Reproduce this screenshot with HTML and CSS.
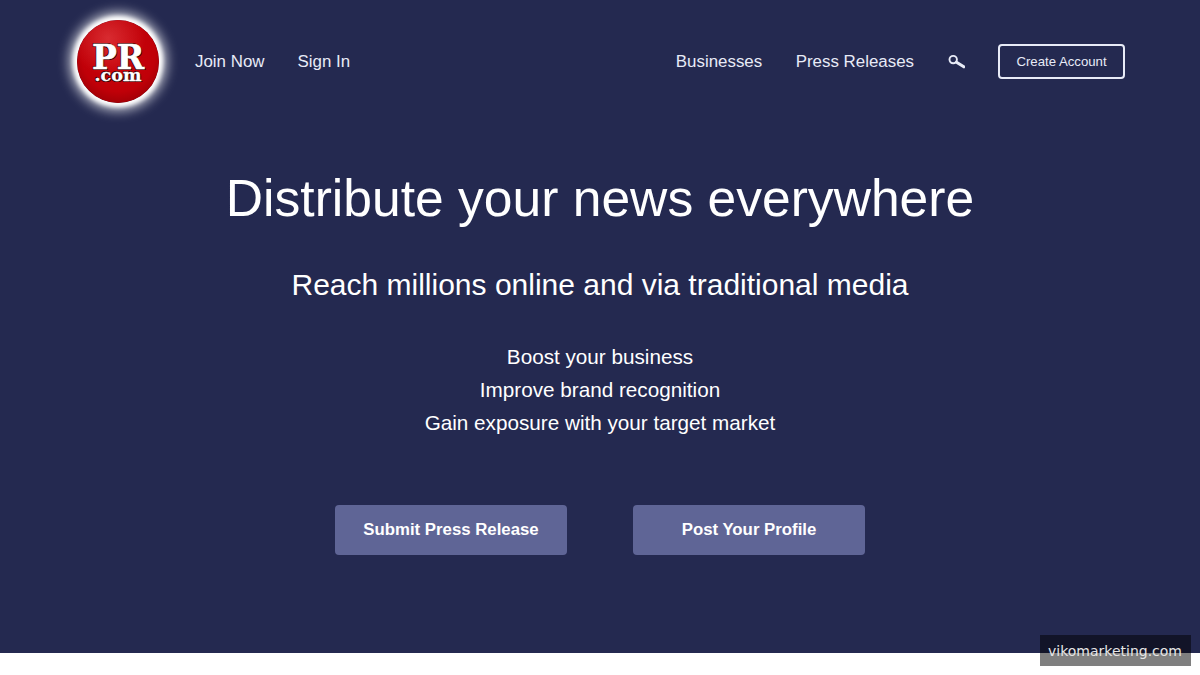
FILE: index.html
```html
<!DOCTYPE html>
<html lang="en">
<head>
    <meta charset="UTF-8">
    <meta name="viewport" content="width=device-width, initial-scale=1.0">
    <title>PR.com</title>
    <link rel="stylesheet" href="styles.css">
</head>
<body>
    <section class="hero">
        <header class="top-nav">
            <a class="logo" href="#">PR<br><small>.com</small></a>
            <nav class="nav-left">
                <a href="#">Join Now</a>
                <a href="#">Sign In</a>
            </nav>
            <nav class="nav-right">
                <a href="#">Businesses</a>
                <a href="#">Press Releases</a>
                <a class="search-link" href="#" aria-label="Search">
                    <svg width="17" height="16" viewBox="0 0 17 16">
                        <circle cx="5.2" cy="5.6" r="3.7" fill="none" stroke="#e8ebf7" stroke-width="1.9"/>
                        <path d="M8.5 8.2 L15.8 12.8" fill="none" stroke="#e8ebf7" stroke-width="3" stroke-linecap="round"/>
                    </svg>
                </a>
                <a class="create-account" href="#">Create Account</a>
            </nav>
        </header>

        <div class="hero-text">
            <h1>Distribute your news everywhere</h1>
            <h2>Reach millions online and via traditional media</h2>
            <ul class="benefits">
                <li>Boost your business</li>
                <li>Improve brand recognition</li>
                <li>Gain exposure with your target market</li>
            </ul>
        </div>

        <div class="cta-row">
            <a class="cta" href="#">Submit Press Release</a>
            <a class="cta" href="#">Post Your Profile</a>
        </div>
    </section>

    <div class="watermark">vikomarketing.com</div>
</body>
</html>
```

FILE: styles.css
```css
* {
    box-sizing: border-box;
}
html, body {
    height: 675px;
    overflow: hidden;
}
body {
    margin: 0;
    background: #fff;
    color: #fff;
    font-family: "Liberation Sans", Arial, sans-serif;
}
a {
    color: inherit;
    text-decoration: none;
}
.hero {
    height: 653px;
    background: #242950;
}
.top-nav {
    display: flex;
    align-items: center;
    height: 122px;
    padding: 0 75px 0 77px;
}
.logo {
    width: 82px;
    height: 83px;
    margin-right: 36px;
    border-radius: 50%;
    background:
        radial-gradient(circle at 38% 22%, rgba(255, 120, 120, 0.35) 0%, rgba(255, 120, 120, 0) 45%),
        radial-gradient(circle at 50% 42%, #c8040c 0%, #c00008 58%, #a00006 78%, #3c0002 100%);
    box-shadow: 0 0 4px 4px #fff, 0 0 12px 8px rgba(255, 255, 255, 0.7);
    padding-top: 25px;
    text-align: center;
    font-family: "DejaVu Serif", serif;
    font-size: 33px;
    line-height: 25px;
    font-weight: bold;
    color: #fff;
    -webkit-text-stroke: 0.6px #fff;
    text-shadow: 1px 1px 0 #3a0003, -1px 1px 0 #3a0003, -1px -1px 0 #3a0003;
}
.logo small {
    display: block;
    font-size: 17.5px;
    line-height: 11px;
    -webkit-text-stroke: 0.3px #fff;
}
.nav-left, .nav-right {
    display: flex;
    align-items: center;
    font-size: 16.9px;
    color: #e8ebf7;
    padding-top: 1px;
}
.nav-left {
    gap: 33px;
}
.nav-right {
    margin-left: auto;
    gap: 33.5px;
}
.search-link {
    display: flex;
}
.create-account {
    width: 127px;
    height: 35px;
    border: 2px solid #e8ebf7;
    border-radius: 4px;
    font-size: 13.2px;
    display: flex;
    align-items: center;
    justify-content: center;
}
.hero-text {
    text-align: center;
}
h1 {
    margin: 43px 0 0;
    font-size: 51.6px;
    line-height: 66px;
    font-weight: normal;
}
h2 {
    margin: 36px 0 0;
    font-size: 30px;
    line-height: 36px;
    font-weight: normal;
}
.benefits {
    list-style: none;
    margin: 37px 0 0;
    padding: 0;
    font-size: 20.7px;
    line-height: 33px;
}
.cta-row {
    display: flex;
    justify-content: center;
    gap: 66px;
    margin-top: 66px;
}
.cta {
    width: 232px;
    height: 50px;
    display: flex;
    align-items: center;
    justify-content: center;
    background: #5f6596;
    border-radius: 4px;
    font-size: 16.8px;
    font-weight: bold;
}
.watermark {
    position: absolute;
    left: 1040px;
    top: 635px;
    width: 151px;
    height: 31px;
    padding-right: 1px;
    background: rgba(0, 0, 0, 0.5);
    color: #e6e6e6;
    font-family: "DejaVu Sans", sans-serif;
    font-size: 14px;
    line-height: 32px;
    text-align: center;
}
```
